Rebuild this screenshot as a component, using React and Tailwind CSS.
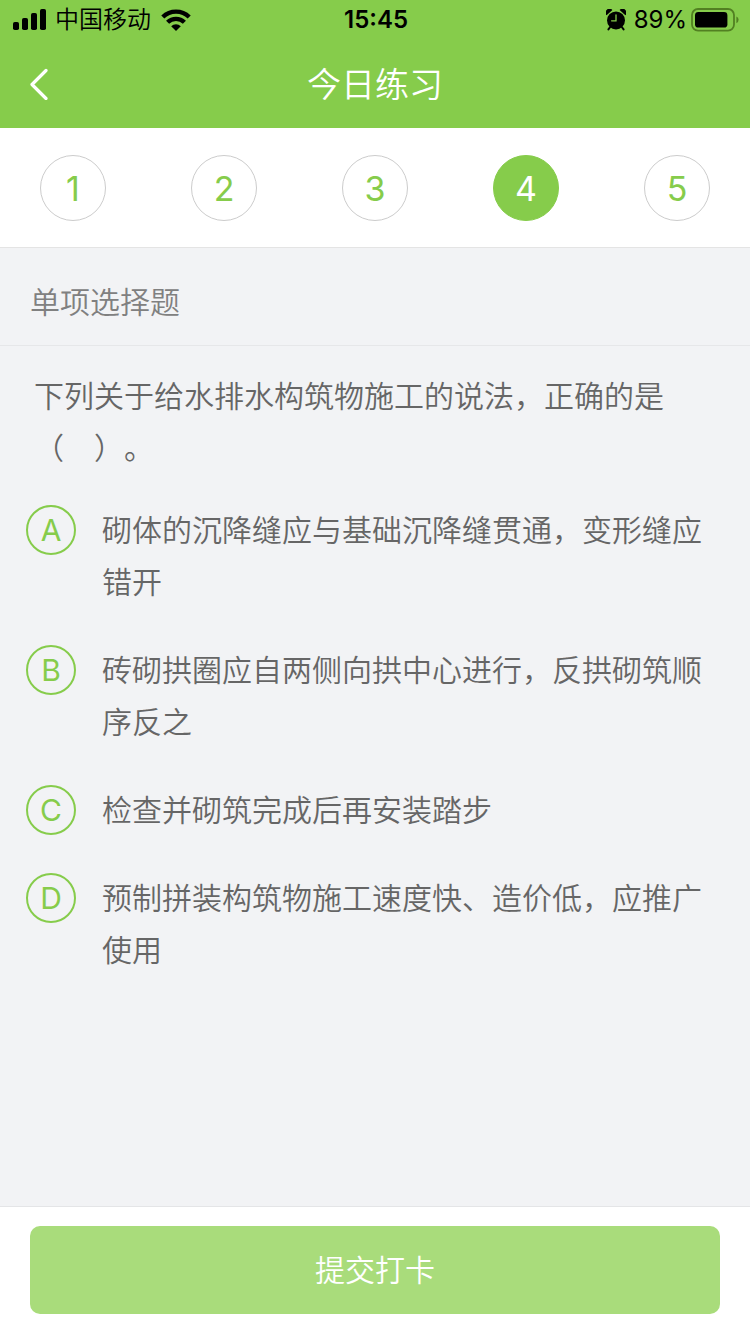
// Daily practice page: question switcher, single choice question, submit bar
import React, { useState } from 'react';
import clsx from 'clsx';

const QUESTIONS = [1, 2, 3, 4, 5];

const OPTIONS = [
  { key: 'A', text: '砌体的沉降缝应与基础沉降缝贯通，变形缝应错开' },
  { key: 'B', text: '砖砌拱圈应自两侧向拱中心进行，反拱砌筑顺序反之' },
  { key: 'C', text: '检查并砌筑完成后再安装踏步' },
  { key: 'D', text: '预制拼装构筑物施工速度快、造价低，应推广使用' },
];

function SignalIcon() {
  return (
    <svg width="32" height="22" viewBox="0 0 32 22" className="overflow-visible" aria-hidden="true">
      <rect x="0" y="13" width="6" height="8" rx="1.8" />
      <rect x="9" y="9" width="6" height="12" rx="1.8" />
      <rect x="18" y="4" width="6" height="17" rx="1.8" />
      <rect x="27" y="0" width="6" height="21" rx="1.8" />
    </svg>
  );
}

function WifiIcon() {
  return (
    <svg width="30" height="22" viewBox="0 0 30 22" aria-hidden="true">
      <g fill="none" stroke="#000" strokeWidth="4.4">
        <path d="M1.8 8 A19 19 0 0 1 28.2 8" />
        <path d="M6.6 13.3 A12 12 0 0 1 23.4 13.3" />
      </g>
      <path d="M15 22 L10.2 17.2 A6.8 6.8 0 0 1 19.8 17.2 Z" />
    </svg>
  );
}

function AlarmIcon() {
  return (
    <svg width="20" height="22" viewBox="0 0 20 22" aria-hidden="true">
      <circle cx="10" cy="11.4" r="9" />
      <path d="M0.6 6.2 A3.6 3.6 0 0 1 6.4 1 Z" />
      <path d="M19.4 6.2 A3.6 3.6 0 0 0 13.6 1 Z" />
      <path d="M4.2 18 L2.4 20.4 M15.8 18 L17.6 20.4" stroke="#000" strokeWidth="2" strokeLinecap="round" />
      <path d="M10 5.8 V11.8 H5.6" fill="none" stroke="#86cc4b" strokeWidth="1.3" strokeLinecap="round" />
    </svg>
  );
}

function BatteryIcon() {
  return (
    <svg width="48" height="24" viewBox="0 0 48 24" aria-hidden="true">
      <rect x="1" y="1" width="42" height="21.6" rx="6" fill="none" stroke="#528022" strokeWidth="1.8" />
      <rect x="4" y="4" width="32.4" height="15.6" rx="3.4" />
      <path d="M45.4 8.4 Q47.6 9.4 47.6 11.8 Q47.6 14.2 45.4 15.2 Z" fill="#528022" />
    </svg>
  );
}

function StatusBar() {
  return (
    <div className="grid h-10 grid-cols-[1fr_auto_1fr] items-center pr-[11px] pl-[13px] text-2xl text-black">
      <div className="flex items-center gap-2.5">
        <SignalIcon />
        <span>中国移动</span>
        <WifiIcon />
      </div>
      <span className="font-semibold">15:45</span>
      <div className="flex items-center justify-end gap-1">
        <AlarmIcon />
        <span className="pl-1 font-normal">89%</span>
        <BatteryIcon />
      </div>
    </div>
  );
}

export default function App() {
  const [current, setCurrent] = useState(4);
  const [answer, setAnswer] = useState('');

  return (
    <div className="flex min-h-screen flex-col bg-[#f2f3f5] font-['Inter','Noto_Sans_CJK_SC',sans-serif] font-[350] text-[#666] [text-spacing-trim:space-all]">
      {/* Header */}
      <header className="bg-[#86cc4b]">
        <StatusBar />
        <div className="grid h-[88px] grid-cols-[1fr_auto_1fr] items-center px-7">
          <button type="button" aria-label="返回" className="justify-self-start">
            <svg width="22" height="32" viewBox="0 0 22 32" fill="none" stroke="#fff" strokeWidth="3.2" strokeLinecap="round" strokeLinejoin="round">
              <path d="M18 2.5 L4 16.5 L18 30.5" />
            </svg>
          </button>
          <h1 className="text-[34px] font-[350] text-white">今日练习</h1>
        </div>
      </header>

      {/* Question switcher */}
      <nav className="flex justify-between border-b border-[#e4e4e4] bg-white px-10 pt-[27px] pb-[26px]">
        {QUESTIONS.map((n) => (
          <button
            key={n}
            type="button"
            onClick={() => setCurrent(n)}
            className={clsx(
              'flex size-[66px] items-center justify-center rounded-full border text-[34px] font-normal',
              n === current ? 'border-[#86cc4b] bg-[#86cc4b] text-white' : 'border-[#ccc] bg-white text-[#86cc4b]'
            )}
          >
            {n}
          </button>
        ))}
      </nav>

      <h2 className="border-b border-[#e6e7e9] px-[30px] pt-8 pb-5 text-[30px] leading-[45px] font-[350] text-[#808080]">单项选择题</h2>

      {/* Question */}
      <main className="flex-1 pt-6 pb-9">
        <p className="px-[34px] text-[30px] leading-[52px]">下列关于给水排水构筑物施工的说法，正确的是（　）。</p>
        <div role="radiogroup" aria-label="选项" className="flex flex-col gap-9 px-[26px] pt-[30px]">
          {OPTIONS.map(({ key, text }) => (
            <label key={key} className="flex items-start gap-[26px]">
              <input
                type="radio"
                name="answer"
                value={key}
                checked={answer === key}
                onChange={() => setAnswer(key)}
                className="peer sr-only"
              />
              <span className="mt-px flex size-[50px] shrink-0 items-center justify-center rounded-full border-2 border-[#86cc4b] text-[30px] font-normal text-[#86cc4b] peer-checked:bg-[#86cc4b] peer-checked:text-white">
                {key}
              </span>
              <span className="text-[30px] leading-[52px]">{text}</span>
            </label>
          ))}
        </div>
      </main>

      {/* Submit */}
      <footer className="border-t border-[#e4e5e7] bg-white px-[30px] pt-[19px] pb-5">
        <button type="button" className="h-[88px] w-full rounded-[10px] bg-[#a9dc7b] text-[30px] text-white">
          提交打卡
        </button>
      </footer>
    </div>
  );
}
